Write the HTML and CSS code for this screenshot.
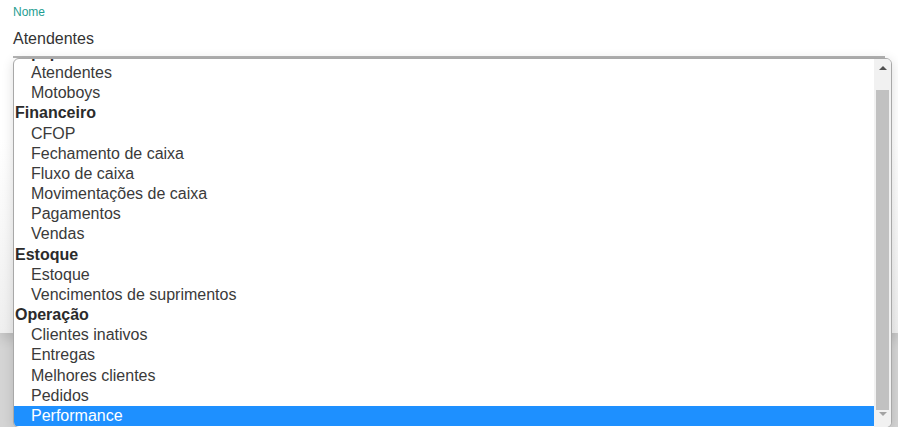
FILE: index.html
```html
<!DOCTYPE html>
<html lang="pt-BR">
<head>
    <meta charset="UTF-8">
    <meta name="viewport" content="width=device-width, initial-scale=1.0">
    <title>Relatórios</title>
    <link rel="stylesheet" href="styles.css">
</head>
<body>
    <div class="modal">
        <div class="field">
            <label class="field-label">Nome</label>
            <div class="field-input">Atendentes</div>
        </div>
        <button class="btn">Salvar</button>
    </div>

    <div class="dropdown">
        <div class="dropdown-list">
            <div class="dropdown-items">
                <div class="group">Equipe</div>
                <div class="option">Atendentes</div>
                <div class="option">Motoboys</div>
                <div class="group">Financeiro</div>
                <div class="option">CFOP</div>
                <div class="option">Fechamento de caixa</div>
                <div class="option">Fluxo de caixa</div>
                <div class="option">Movimentações de caixa</div>
                <div class="option">Pagamentos</div>
                <div class="option">Vendas</div>
                <div class="group">Estoque</div>
                <div class="option">Estoque</div>
                <div class="option">Vencimentos de suprimentos</div>
                <div class="group">Operação</div>
                <div class="option">Clientes inativos</div>
                <div class="option">Entregas</div>
                <div class="option">Melhores clientes</div>
                <div class="option">Pedidos</div>
                <div class="option selected">Performance</div>
            </div>
        </div>
        <div class="scrollbar">
            <div class="scroll-btn"><span class="arrow-up"></span></div>
            <div class="scroll-track">
                <div class="scroll-thumb"></div>
            </div>
            <div class="scroll-btn"><span class="arrow-down"></span></div>
        </div>
    </div>
</body>
</html>
```

FILE: styles.css
```css
body {
    margin: 0;
    font-family: "Liberation Sans", Arial, sans-serif;
    background-color: #d4d4d4;
    height: 427px;
    overflow: hidden;
}
.modal {
    background: linear-gradient(#fff 0, #fff 140px, #efefef 333px);
    height: 333px;
    padding: 0 13px;
    box-shadow: 0 6px 12px rgba(0, 0, 0, 0.12);
}
.field-label {
    display: block;
    padding-top: 5px;
    font-size: 12px;
    line-height: 14px;
    color: #1f9e92;
}
.field-input {
    margin-top: 9px;
    font-size: 16px;
    line-height: 22px;
    color: #333;
    padding-bottom: 6px;
    border-bottom: 2px solid #b3b3b3;
}
.btn {
    display: block;
    margin-top: 183px;
    height: 36px;
    padding: 0 16px;
    border: none;
    border-radius: 2px;
    background-color: #26796c;
    color: #fff;
}
.dropdown {
    position: absolute;
    top: 58px;
    left: 13px;
    width: 877px;
    height: 368px;
    display: flex;
    background-color: #fff;
    border: 1px solid #a8a8a8;
    border-radius: 6px;
    overflow: hidden;
    box-shadow: 0 2px 12px rgba(0, 0, 0, 0.14);
}
.dropdown-list {
    flex: 1;
    overflow: hidden;
}
.dropdown-items {
    margin-top: -16.2px;
}
.group,
.option {
    height: 20.18px;
    line-height: 20.18px;
    font-size: 16px;
    white-space: nowrap;
}
.group {
    padding-left: 1px;
    font-weight: bold;
    color: #2b2b2b;
}
.option {
    padding-left: 17px;
    color: #3a3a3a;
}
.option.selected {
    background-color: #1e90ff;
    color: #fff;
}
.scrollbar {
    width: 17px;
    display: flex;
    flex-direction: column;
    background-color: #f1f1f1;
}
.scroll-btn {
    height: 17px;
    display: flex;
    align-items: center;
    justify-content: center;
}
.scroll-btn:last-child {
    height: 15px;
    align-items: flex-start;
    padding-top: 2px;
}
.arrow-up {
    width: 0;
    height: 0;
    border-left: 4px solid transparent;
    border-right: 4px solid transparent;
    border-bottom: 4px solid #505050;
}
.arrow-down {
    width: 0;
    height: 0;
    border-left: 4px solid transparent;
    border-right: 4px solid transparent;
    border-top: 4px solid #a3a3a3;
}
.scroll-track {
    flex: 1;
    display: flex;
    flex-direction: column;
    justify-content: flex-end;
    padding: 0 2px;
}
.scroll-thumb {
    height: 320px;
    background-color: #c1c1c1;
}
```
